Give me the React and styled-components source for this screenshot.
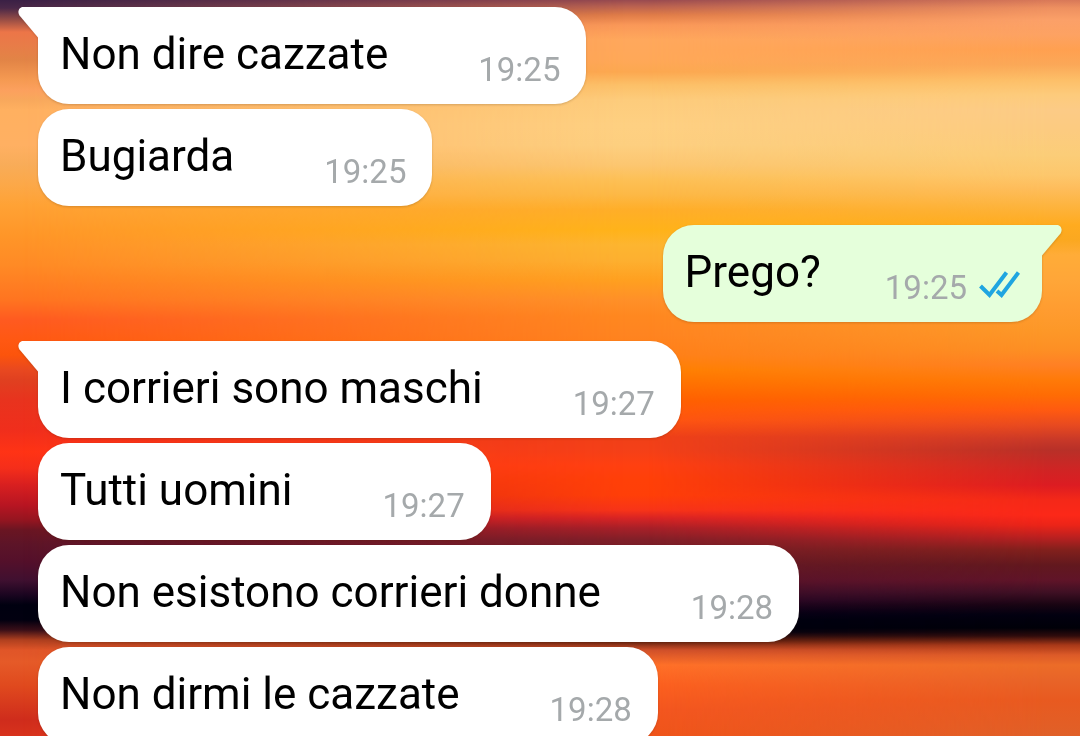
/* Basic */
import React from "react";
/* Styles */
import styled, { createGlobalStyle } from "styled-components";

const GlobalStyle = createGlobalStyle`
    * {
        box-sizing: border-box;
    }
    body {
        margin: 0;
        background: #000010;
        font-family: Roboto, "Liberation Sans", sans-serif;
    }
`;

/* Sunset wallpaper: colour stops from top to bottom, as [position, colour] */
const SKY_HEIGHT = 736;
const skyLeft = [
    [0, "#3a2045"], [8, "#4a2848"], [20, "#9a4e45"], [32, "#ec7548"], [45, "#e87c48"],
    [60, "#e28446"], [80, "#f59a52"], [90, "#fca05e"], [100, "#f8a85c"], [110, "#ffb060"],
    [145, "#ffb062"], [165, "#f8ac58"], [185, "#fca848"], [205, "#ffa235"], [235, "#ff9628"],
    [265, "#ff8a25"], [300, "#ff7420"], [320, "#ff5a20"], [340, "#ff5812"], [355, "#fc540c"],
    [370, "#e84820"], [380, "#e04020"], [400, "#e8331e"], [430, "#f02e1c"], [452, "#ff3315"],
    [468, "#f52e1a"], [485, "#d81f20"], [505, "#b81522"], [520, "#951520"], [530, "#6a1522"],
    [545, "#5c1428"], [560, "#55102a"], [580, "#401030"], [595, "#1a0520"], [605, "#000010"],
    [620, "#020010"], [630, "#3a0f18"], [640, "#b0401f"], [650, "#e05528"], [662, "#e55a28"],
    [685, "#e04a1e"], [720, "#cf2c1c"], [736, "#d8321c"]
];
const skyMiddle = [
    [0, "#984a50"], [6, "#b86050"], [15, "#e07c48"], [25, "#fa9858"], [40, "#ffa85c"],
    [60, "#ffa858"], [72, "#fca850"], [85, "#fcc068"], [100, "#fdcc7c"], [125, "#fed082"],
    [145, "#fdcf80"], [165, "#fcc670"], [180, "#fdc055"], [195, "#fdb845"], [210, "#ffae28"],
    [230, "#ffb31a"], [245, "#fdb530"], [260, "#fdb030"], [280, "#ffa020"], [300, "#ff9028"],
    [315, "#ff8820"], [335, "#ff8420"], [355, "#ff8018"], [370, "#ff8000"], [385, "#ff7000"],
    [400, "#ff6000"], [420, "#ff5510"], [437, "#f04018"], [450, "#f44018"], [465, "#ff4010"],
    [480, "#ff4008"], [495, "#ff3f08"], [510, "#f83418"], [518, "#d82424"], [528, "#a82028"],
    [540, "#801f28"], [560, "#6a1a25"], [582, "#55122a"], [600, "#30082a"], [612, "#0c0018"],
    [620, "#000010"], [632, "#000010"], [641, "#60200f"], [650, "#d0502a"], [665, "#ff7028"],
    [685, "#fc601f"], [710, "#f4561f"], [736, "#f0541a"]
];
const skyRight = [
    [0, "#d87858"], [8, "#ee9060"], [20, "#fba068"], [35, "#fda262"], [50, "#ffa050"],
    [65, "#fba858"], [80, "#fdbf68"], [95, "#fdcb7c"], [110, "#fccb86"], [130, "#fccb80"],
    [155, "#fbcd78"], [175, "#fdc76c"], [188, "#febd5c"], [205, "#fdb440"], [225, "#ffab1f"],
    [240, "#fba820"], [255, "#ffac38"], [280, "#ffa638"], [310, "#ff9c30"], [330, "#fd9828"],
    [350, "#fd8f24"], [365, "#ff8024"], [380, "#ff7a08"], [395, "#ff6c04"], [410, "#ff5a10"],
    [425, "#e84a20"], [440, "#c83828"], [450, "#b83028"], [470, "#d02424"], [485, "#dc1c22"],
    [500, "#f42818"], [515, "#fc2818"], [525, "#ec2418"], [538, "#b82020"], [550, "#82201c"],
    [565, "#62181e"], [580, "#601428"], [592, "#401024"], [605, "#180412"], [615, "#020010"],
    [628, "#000008"], [636, "#300c0c"], [645, "#a83818"], [655, "#dc5a28"], [665, "#ec6c28"],
    [680, "#e86428"], [700, "#e85a20"], [736, "#e06028"]
];

const toGradient = stops =>
    `linear-gradient(${stops
        .map(([y, color]) => `${color} ${((y / SKY_HEIGHT) * 100).toFixed(2)}%`)
        .join(", ")})`;

const Chat = styled.main`
    position: relative;
    height: 100vh;
    overflow: hidden;
    padding: 7px 38px 0;
`;
const Sky = styled.div`
    position: absolute;
    inset: 0;
    background: ${props => toGradient(props.$stops)};
    mask-image: ${props => props.$mask || "none"};
`;
const Messages = styled.ol`
    position: relative;
    display: flex;
    flex-direction: column;
    gap: 5px;
    margin: 0;
    padding: 0;
    list-style: none;
`;
const Bubble = styled.li`
    position: relative;
    align-self: ${props => (props.$sent ? "flex-end" : "flex-start")};
    display: flex;
    align-items: flex-start;
    gap: ${props => (props.$sent ? 64 : 90)}px;
    max-width: 90%;
    margin-top: ${props => (props.$spaced ? 14 : 0)}px;
    padding: 20px ${props => (props.$sent ? 22 : 26)}px 15px 22px;
    border-radius: 31px;
    border-top-left-radius: ${props => (props.$tail && !props.$sent ? 0 : 31)}px;
    border-top-right-radius: ${props => (props.$tail && props.$sent ? 0 : 31)}px;
    background: ${props => (props.$sent ? "#e5ffdb" : "#ffffff")};
    filter: drop-shadow(0 1px 1px rgba(60, 30, 0, 0.2));
`;
const Tail = styled.svg`
    position: absolute;
    top: 0;
    left: ${props => (props.$sent ? "auto" : "-20px")};
    right: ${props => (props.$sent ? "-20px" : "auto")};
    width: 21px;
    height: 31px;
    transform: ${props => (props.$sent ? "scaleX(-1)" : "none")};
    fill: ${props => (props.$sent ? "#e5ffdb" : "#ffffff")};
`;
const Text = styled.span`
    color: #000000;
    font-size: 44px;
    line-height: 54px;
`;
const Meta = styled.span`
    display: flex;
    align-items: center;
    gap: 12px;
    margin-top: 24px;
`;
const Time = styled.time`
    color: #a5a9ab;
    font-size: 33px;
    line-height: 38px;
`;
const Ticks = styled.svg`
    width: 41px;
    height: 38px;
    fill: none;
    stroke: #1fa5e0;
    stroke-width: 4;
`;

const messages = [
    { text: "Non dire cazzate", time: "19:25", tail: true },
    { text: "Bugiarda", time: "19:25" },
    { text: "Prego?", time: "19:25", tail: true, sent: true, spaced: true },
    { text: "I corrieri sono maschi", time: "19:27", tail: true, spaced: true },
    { text: "Tutti uomini", time: "19:27" },
    { text: "Non esistono corrieri donne", time: "19:28" },
    { text: "Non dirmi le cazzate", time: "19:28" }
];

const Message = ({ text, time, tail, sent, spaced }) => {
    return (
        <Bubble $tail={tail} $sent={sent} $spaced={spaced}>
            {tail && (
                <Tail $sent={sent} viewBox="0 0 21 31" aria-hidden="true">
                    <path d="M21 0H5C1 0-1 5 1.500 8.500L20 30.500H21Z" />
                </Tail>
            )}
            <Text>{text}</Text>
            <Meta>
                <Time dateTime={time}>{time}</Time>
                {sent && (
                    <Ticks viewBox="0 0 41 38" role="img" aria-label="Letto">
                        <path d="M1.500 17L10.500 26L27.500 3.500" />
                        <path d="M18 22L22.500 26L39.500 3.500" />
                    </Ticks>
                )}
            </Meta>
        </Bubble>
    );
};

const App = () => {
    return (
        <Chat>
            <GlobalStyle />
            <Sky $stops={skyLeft} />
            <Sky $stops={skyMiddle} $mask="linear-gradient(90deg, transparent 2%, #000 58%)" />
            <Sky $stops={skyRight} $mask="linear-gradient(90deg, transparent 60%, #000 97%)" />
            <Messages>
                {messages.map(message => (
                    <Message key={message.text} {...message} />
                ))}
            </Messages>
        </Chat>
    );
};

export default App;
